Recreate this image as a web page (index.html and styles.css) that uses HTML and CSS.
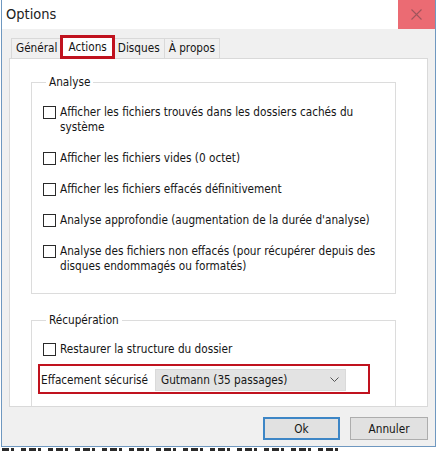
FILE: index.html
```html
<!DOCTYPE html>
<html lang="fr">
<head>
  <meta charset="UTF-8">
  <meta name="viewport" content="width=device-width, initial-scale=1.0">
  <title>Options</title>
  <link rel="stylesheet" href="styles.css">
</head>
<body>
  <div class="window">
    <div class="titlebar">
      <span class="title">Options</span>
      <div class="close">
        <svg width="11" height="11" viewBox="0 0 11 11"><path d="M0.5 0.5 L10.5 10.5 M10.5 0.5 L0.5 10.5" stroke="#a0555c" stroke-width="1.1" fill="none"/></svg>
      </div>
    </div>

    <div class="client">
      <div class="tabs">
        <div class="tab">Général</div>
        <div class="tab active">Actions</div>
        <div class="tab">Disques</div>
        <div class="tab">À propos</div>
      </div>

      <div class="panel">
        <fieldset class="group">
          <legend>Analyse</legend>
          <div class="options">
            <label class="option"><span class="box"></span><span>Afficher les fichiers trouvés dans les dossiers cachés du<br>système</span></label>
            <label class="option"><span class="box"></span><span>Afficher les fichiers vides (0 octet)</span></label>
            <label class="option"><span class="box"></span><span>Afficher les fichiers effacés définitivement</span></label>
            <label class="option"><span class="box"></span><span>Analyse approfondie (augmentation de la durée d'analyse)</span></label>
            <label class="option"><span class="box"></span><span>Analyse des fichiers non effacés (pour récupérer depuis des<br>disques endommagés ou formatés)</span></label>
          </div>
        </fieldset>

        <fieldset class="group recovery">
          <legend>Récupération</legend>
          <label class="option"><span class="box"></span><span>Restaurer la structure du dossier</span></label>
          <div class="wipe">
            <span class="wipe-label">Effacement sécurisé</span>
            <div class="select">
              <span>Gutmann (35 passages)</span>
              <svg width="9" height="6" viewBox="0 0 9 6"><path d="M0.5 0.5 L4.5 4.5 L8.5 0.5" stroke="#555" stroke-width="1" fill="none"/></svg>
            </div>
          </div>
        </fieldset>
      </div>

      <div class="actions">
        <button class="btn btn-default">Ok</button>
        <button class="btn">Annuler</button>
      </div>
    </div>
  </div>
  <div class="under"></div>
</body>
</html>
```

FILE: styles.css
```css
body {
  margin: 0;
  background: #fff;
  font-family: "DejaVu Sans Condensed", "DejaVu Sans", sans-serif;
  font-stretch: condensed;
  font-size: 11.7px;
  color: #151515;
}

.window {
  width: 433px;
  margin-left: 1px;
  border: 1px solid #6f98c0;
  border-top: none;
}

.titlebar {
  height: 29px;
  background: #fff;
  display: flex;
  justify-content: space-between;
}
.title {
  font-size: 14.5px;
  line-height: 29px;
  padding-left: 4px;
  color: #222;
}
.close {
  width: 37px;
  height: 29px;
  background: #eb6b73;
  display: flex;
  align-items: center;
  justify-content: center;
}

.client {
  background: #f0f0f0;
  height: 417px;
  box-sizing: border-box;
  padding: 6px 7px 0 7px;
}

/* tab strip */
.tabs {
  display: flex;
  align-items: flex-end;
  height: 23px;
  padding-left: 3px;
}
.tab {
  height: 20px;
  box-sizing: border-box;
  border: 1px solid #d9d9d9;
  border-bottom: none;
  margin-left: -1px;
  padding: 0 4px;
  line-height: 19px;
  background: #f0f0f0;
}
.tab.active {
  position: relative;
  z-index: 1;
  height: 24px;
  margin: 0 -1px -1px -2px;
  padding: 0 5px;
  line-height: 19px;
  background: #fff;
  border: 3px solid #c0121e;
}

.panel {
  width: 419px;
  height: 349px;
  box-sizing: border-box;
  background: #fff;
  border: 1px solid #d9d9d9;
  padding: 16px 31px 0 21px;
  overflow: hidden;
}

.group {
  margin: 0;
  padding: 15px 0 19px 11px;
  border: 1px solid #dcdcdc;
}
.group legend {
  margin-left: 3px;
  padding: 0 3px;
  line-height: 15px;
}
.recovery {
  margin-top: 19px;
  padding-top: 14px;
}

.options {
  display: flex;
  flex-direction: column;
  gap: 16px;
}
.option {
  display: flex;
  align-items: flex-start;
  gap: 4px;
  line-height: 15px;
}
.box {
  flex: none;
  width: 13px;
  height: 13px;
  margin-top: 1px;
  box-sizing: border-box;
  border: 1px solid #2a2a2a;
  background: #fff;
}

/* highlighted secure-wipe row */
.wipe {
  display: flex;
  align-items: center;
  width: 332px;
  height: 30px;
  box-sizing: border-box;
  margin: 7px 0 0 -5px;
  padding: 2px 0 0 1px;
  border: 2px solid #c0121e;
}
.wipe-label {
  width: 114px;
}
.select {
  width: 191px;
  height: 22px;
  box-sizing: border-box;
  display: flex;
  align-items: center;
  justify-content: space-between;
  padding: 0 6px 0 5px;
  background: #e3e3e3;
  border: 1px solid #dadada;
}

.actions {
  display: flex;
  justify-content: flex-end;
  gap: 10px;
  padding: 10px 0 0 0;
  width: 419px;
}
.btn {
  width: 78px;
  height: 23px;
  font: inherit;
  color: #151515;
  background: #e1e1e1;
  border: 1px solid #adadad;
}
.btn-default {
  width: 77px;
  border: 2px solid #3d86c6;
}

/* desktop content peeking out below the dialog */
.under {
  width: 336px;
  height: 3px;
  margin: 1px 0 0 2px;
  background: repeating-linear-gradient(90deg, #2b2b2b 0 7px, transparent 7px 9px, #2b2b2b 9px 12px, transparent 12px 19px, #2b2b2b 19px 24px, transparent 24px 27px);
}
```
